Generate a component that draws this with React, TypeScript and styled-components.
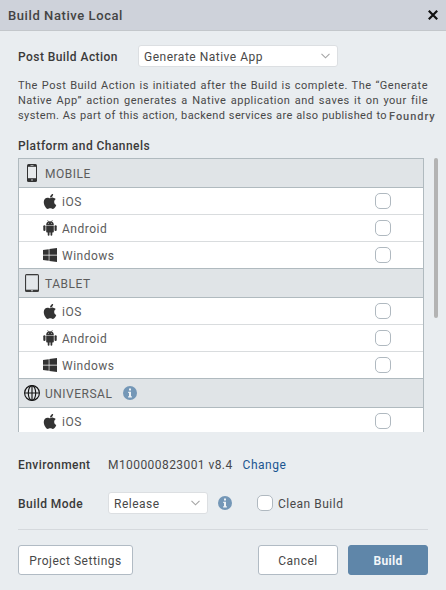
import React from "react";
import styled, { createGlobalStyle } from "styled-components";
import { FaApple, FaWindows } from "react-icons/fa";

const GlobalStyle = createGlobalStyle`
  * { box-sizing: border-box; }
  body { margin: 0; background: #e9edf0; }
`;

const Dialog = styled.main`
  width: 446px;
  height: 590px;
  overflow: hidden;
  display: flex;
  flex-direction: column;
  background: #e9edf0;
  color: #484848;
  font: 12px/16px Roboto, sans-serif;
  letter-spacing: 0.5px;
  white-space: nowrap;
`;

const TitleBar = styled.header`
  height: 31px;
  flex: none;
  display: flex;
  align-items: center;
  justify-content: space-between;
  padding: 0 8px;
  background: #ced2da;
  border-bottom: 1px solid #c3c7cb;
`;

const Title = styled.h1`
  margin: 0;
  padding-top: 2px;
  font-size: 13px;
  font-weight: 500;
  letter-spacing: 0.58px;
  color: #444;
`;

const CloseButton = styled.button`
  display: flex;
  padding: 0;
  border: 0;
  background: none;
`;

const Body = styled.div`
  padding: 14px 8px 0 18px;
`;

const Field = styled.div`
  display: flex;
  align-items: center;
  height: 22px;
`;

const Text = styled.span`
  padding-top: 2px;
`;

const VersionText = styled(Text)`
  letter-spacing: 0.43px;
`;

const Label = styled(Text)<{ $width: number }>`
  flex: none;
  width: ${(p) => p.$width}px;
  font-weight: 500;
  letter-spacing: 0.44px;
  color: #3a3a3a;
`;

const SelectBox = styled.div<{ $width: number }>`
  display: flex;
  align-items: center;
  justify-content: space-between;
  width: ${(p) => p.$width}px;
  height: 22px;
  padding: 0 7px 0 5px;
  border: 1px solid #dcdfe2;
  border-radius: 3px;
  background: #fff;
`;

const Description = styled.div`
  margin-top: 11px;
  font-size: 11px;
  line-height: 15px;
`;

const Line = styled.div<{ $width: number; $tight?: boolean }>`
  flex: none;
  width: ${(p) => p.$width}px;
  letter-spacing: ${(p) => (p.$tight ? 0.38 : 0.5)}px;
  word-spacing: -0.5px;
  text-align: justify;
  text-align-last: justify;
  white-space: normal;
`;

const LastLine = styled.div`
  display: flex;
`;

const Product = styled.span`
  padding: 1px 0 0 2px;
  font-weight: 500;
  letter-spacing: 0.95px;
  color: #555;
`;

const SectionTitle = styled.h2`
  margin: 14px 0 4px;
  font-size: 12px;
  line-height: 16px;
  font-weight: 500;
  letter-spacing: 0.44px;
  color: #3a3a3a;
`;

const ScrollArea = styled.div`
  display: flex;
  justify-content: space-between;
  height: 274px;
`;

const Table = styled.div`
  width: 406px;
  overflow: hidden;
  border: solid #b0babf;
  border-width: 1px 1px 0;
  background: #fff;
`;

const ScrollThumb = styled.div`
  width: 4px;
  height: 160px;
  border-radius: 2px;
  background: #b3b3b3;
`;

const GroupHeader = styled.div`
  display: flex;
  align-items: center;
  height: 29px;
  padding-left: 5px;
  background: #e0e4e7;
  border-bottom: 1px solid #b0babf;
  color: #5c5c5c;
`;

const GroupIcon = styled.span`
  display: flex;
  justify-content: center;
  width: 16px;
  margin-right: 5px;
`;

const Row = styled.div<{ $last: boolean }>`
  display: flex;
  align-items: center;
  height: 27px;
  padding: 0 32px 0 23px;
  border-bottom: 1px solid ${(p) => (p.$last ? "#b0babf" : "#d9dcde")};
  color: #5c5c5c;
`;

const RowIcon = styled.span`
  display: flex;
  justify-content: center;
  width: 16px;
  margin-right: 4px;
  color: #333;
`;

const Check = styled.span`
  width: 16px;
  height: 16px;
  border: 1px solid #b0b9c0;
  border-radius: 5px;
  background: #fff;
`;

const RowCheck = styled(Check)`
  margin-left: auto;
`;

const CleanCheck = styled(Check)`
  margin: 0 5px 0 25px;
`;

const Link = styled(Text).attrs({ as: "a" })`
  margin-left: 10px;
  color: #1b5590;
`;

const Footer = styled.footer`
  display: flex;
  gap: 10px;
  width: 410px;
  margin-top: 15px;
  padding-top: 15px;
  border-top: 1px solid #d5d9dd;
`;

const Button = styled.button<{ $width: number; $primary?: boolean }>`
  width: ${(p) => p.$width}px;
  height: 30px;
  padding: 2px 0 0;
  border: 1px solid ${(p) => (p.$primary ? "#5f86a9" : "#b1bbc4")};
  border-radius: 3px;
  background: ${(p) => (p.$primary ? "#5f86a9" : "#fff")};
  color: ${(p) => (p.$primary ? "#f3f6f9" : "#484848")};
  font: ${(p) => (p.$primary ? 700 : 400)} 12px/16px Roboto, sans-serif;
  letter-spacing: ${(p) => (p.$primary ? 0.3 : 0.5)}px;
`;

const Spacer = styled.span`
  flex: 1;
`;

const InfoSlot = styled.span<{ $gap: number }>`
  display: flex;
  margin-left: ${(p) => p.$gap}px;
`;

const Fields = styled.div`
  display: flex;
  flex-direction: column;
  gap: 17px;
  padding-top: 21px;
`;

const Chevron = () => (
  <svg width="9" height="6" viewBox="0 0 9 6" fill="none" stroke="#a5a5a5" strokeWidth="1.1">
    <path d="M.5 .8 4.5 4.8 8.5 .8" />
  </svg>
);

const InfoIcon = () => (
  <svg width="14" height="14" viewBox="0 0 14 14">
    <circle cx="7" cy="7" r="7" fill="#7497b7" />
    <path d="M6 2.5h2v2H6zM5.2 5.7H8v4.6h.9v1.2H5.1v-1.2H6V6.9h-.8z" fill="#eef2f5" />
  </svg>
);

const PhoneIcon = () => (
  <svg width="10" height="18" viewBox="0 0 10 18">
    <rect width="10" height="18" rx="1.5" fill="#333" />
    <path d="M1 2.8h8v11.4H1z" fill="#e7eaec" />
    <path d="M3.5 1.2h3v.7h-3zM4 15.4h2v1.2H4z" fill="#c8cbce" />
  </svg>
);

const TabletIcon = () => (
  <svg width="14" height="18" viewBox="0 0 14 18">
    <rect width="14" height="18" rx="1.5" fill="#3b3b3b" />
    <path d="M1.1 1.3h11.8v14.4H1.1z" fill="#e3e7ea" />
    <path d="M6 16.3h2v.9H6z" fill="#c8cbce" />
  </svg>
);

const GlobeIcon = () => (
  <svg width="16" height="16" viewBox="0 0 16 16" fill="none" stroke="#151515" strokeWidth="1.15">
    <circle cx="8" cy="8" r="7.4" />
    <ellipse cx="8" cy="8" rx="3.7" ry="7.4" />
    <path d="M8 .6v14.8M.6 8h14.8" />
  </svg>
);

const AndroidIcon = () => (
  <svg width="14" height="16" viewBox="0 0 14 16" fill="currentColor">
    <path d="M3.2 4.9C3.2 3.4 4 2.2 5.2 1.6L4.4.4l.4-.3.9 1.3a4.4 4.4 0 0 1 2.6 0L9.2.1l.4.3-.8 1.2c1.2.6 2 1.8 2 3.3zM3.2 5.4h7.6v6.4c0 .5-.4.8-.8.8h-.7v2.2a.9.9 0 0 1-1.8 0v-2.2h-1v2.2a.9.9 0 0 1-1.8 0v-2.2H4c-.5 0-.8-.4-.8-.8z" />
    <rect x=".3" y="5.3" width="2.2" height="5.7" rx="1" />
    <rect x="11.5" y="5.3" width="2.2" height="5.7" rx="1" />
    <circle cx="5.4" cy="3.3" r=".45" fill="#fff" />
    <circle cx="8.6" cy="3.3" r=".45" fill="#fff" />
  </svg>
);

const channelIcons: Record<string, React.ReactNode> = {
  iOS: <FaApple size={17} />,
  Android: <AndroidIcon />,
  Windows: <FaWindows size={16} />,
};

const groups = [
  { name: "MOBILE", icon: <PhoneIcon />, info: false, channels: ["iOS", "Android", "Windows"] },
  { name: "TABLET", icon: <TabletIcon />, info: false, channels: ["iOS", "Android", "Windows"] },
  { name: "UNIVERSAL", icon: <GlobeIcon />, info: true, channels: ["iOS"] },
];

export default function App() {
  return (
    <Dialog>
      <GlobalStyle />
      <TitleBar>
        <Title>Build Native Local</Title>
        <CloseButton aria-label="Close">
          <svg width="10" height="10" viewBox="0 0 10 10" stroke="#111" strokeWidth="2.2">
            <path d="M.8.8l8.4 8.4M9.2.8.8 9.2" />
          </svg>
        </CloseButton>
      </TitleBar>
      <Body>
        <Field>
          <Label $width={120}>Post Build Action</Label>
          <SelectBox $width={200}>
            <Text>Generate Native App</Text>
            <Chevron />
          </SelectBox>
        </Field>
        <Description>
          <Line $width={410}>The Post Build Action is initiated after the Build is complete. The “Generate</Line>
          <Line $width={410}>Native App” action generates a Native application and saves it on your file</Line>
          <LastLine>
            <Line $width={369} $tight>system. As part of this action, backend services are also published to</Line>
            <Product>Foundry</Product>
          </LastLine>
        </Description>
        <SectionTitle>Platform and Channels</SectionTitle>
        <ScrollArea>
          <Table>
            {groups.map((group) => (
              <React.Fragment key={group.name}>
                <GroupHeader>
                  <GroupIcon>{group.icon}</GroupIcon>
                  <Text>{group.name}</Text>
                  {group.info && <InfoSlot $gap={11}><InfoIcon /></InfoSlot>}
                </GroupHeader>
                {group.channels.map((channel, i) => (
                  <Row key={channel} $last={i === 2}>
                    <RowIcon>{channelIcons[channel]}</RowIcon>
                    <Text>{channel}</Text>
                    <RowCheck />
                  </Row>
                ))}
              </React.Fragment>
            ))}
          </Table>
          <ScrollThumb />
        </ScrollArea>
        <Fields>
          <Field>
            <Label $width={90}>Environment</Label>
            <VersionText>M100000823001 v8.4</VersionText>
            <Link>Change</Link>
          </Field>
          <Field>
            <Label $width={90}>Build Mode</Label>
            <SelectBox $width={100}>
              <Text>Release</Text>
              <Chevron />
            </SelectBox>
            <InfoSlot $gap={10}><InfoIcon /></InfoSlot>
            <CleanCheck />
            <Text>Clean Build</Text>
          </Field>
        </Fields>
        <Footer>
          <Button $width={115}>Project Settings</Button>
          <Spacer />
          <Button $width={80}>Cancel</Button>
          <Button $width={80} $primary>Build</Button>
        </Footer>
      </Body>
    </Dialog>
  );
}
